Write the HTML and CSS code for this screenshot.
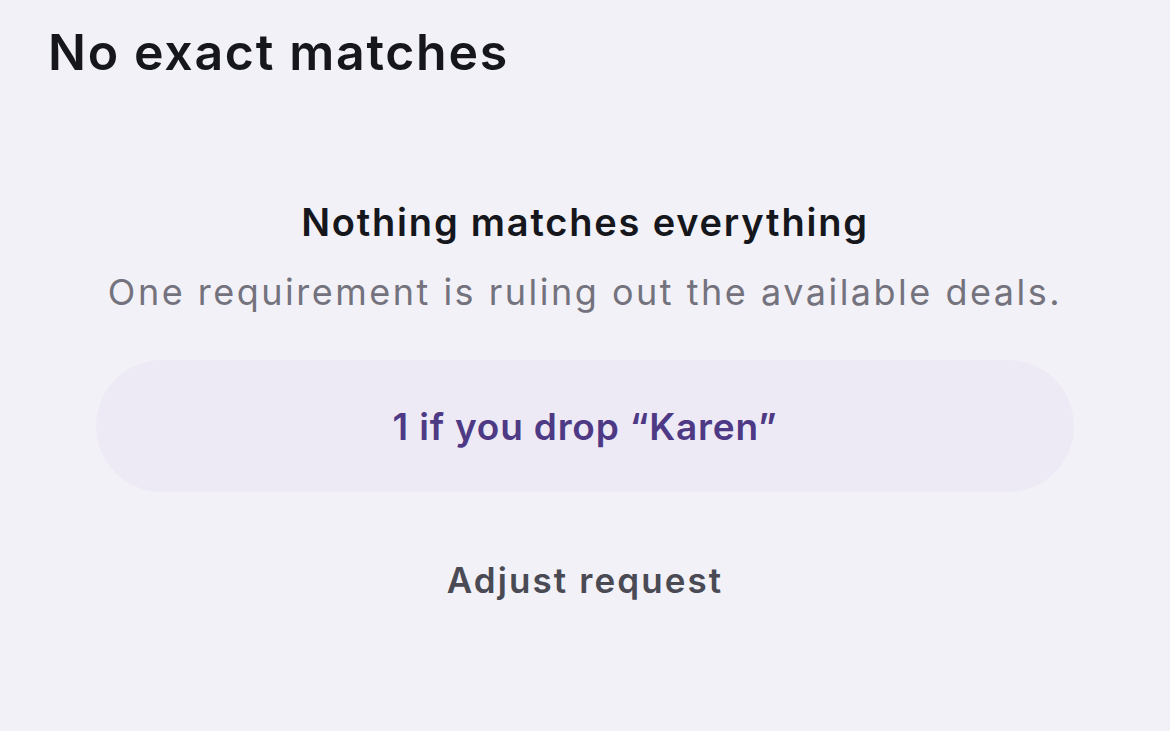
FILE: index.html
```html
<!DOCTYPE html>
<html lang="en">

<head>
    <meta charset="UTF-8">
    <meta name="viewport" content="width=device-width, initial-scale=1.0">
    <title>No exact matches</title>
    <link rel="stylesheet" href="styles.css">
</head>

<body>
    <div class="page">
        <h1 class="title">No exact matches</h1>

        <div class="empty-state">
            <h2 class="empty-heading">Nothing matches everything</h2>
            <p class="empty-text">One requirement is ruling out the available deals.</p>

            <button class="suggestion">1 if you drop “Karen”</button>
            <button class="adjust">Adjust request</button>
        </div>
    </div>
</body>

</html>
```

FILE: styles.css
```css
body {
    margin: 0;
    padding: 0;
    background: #f2f1f7;
    font-family: 'Inter', sans-serif;
    height: 100vh;
    overflow: hidden;
}

.page {
    padding: 22px 48px 0 48px;
}

.title {
    margin: 0;
    font-size: 50px;
    font-weight: 600;
    line-height: 60px;
    color: #15171c;
    letter-spacing: 1.7px;
}

.empty-state {
    display: flex;
    flex-direction: column;
    align-items: center;
    padding: 0 48px;
    margin-top: 112px;
}

.empty-heading {
    margin: 0;
    font-size: 38px;
    font-weight: 600;
    line-height: 56px;
    color: #15171c;
    letter-spacing: 1.8px;
}

.empty-text {
    margin: 18px 0 0 0;
    font-size: 36px;
    font-weight: 400;
    line-height: 48px;
    color: #74737d;
    letter-spacing: 2.5px;
}

button {
    font-family: inherit;
    border: none;
    cursor: pointer;
    background: none;
}

.suggestion {
    align-self: stretch;
    height: 132px;
    margin-top: 44px;
    border-radius: 66px;
    background: #edeaf6;
    color: #4e3985;
    font-size: 37px;
    font-weight: 600;
    letter-spacing: 0.8px;
}

.adjust {
    margin-top: 66px;
    color: #4a4a55;
    font-size: 35px;
    font-weight: 600;
    letter-spacing: 2.1px;
}
```
